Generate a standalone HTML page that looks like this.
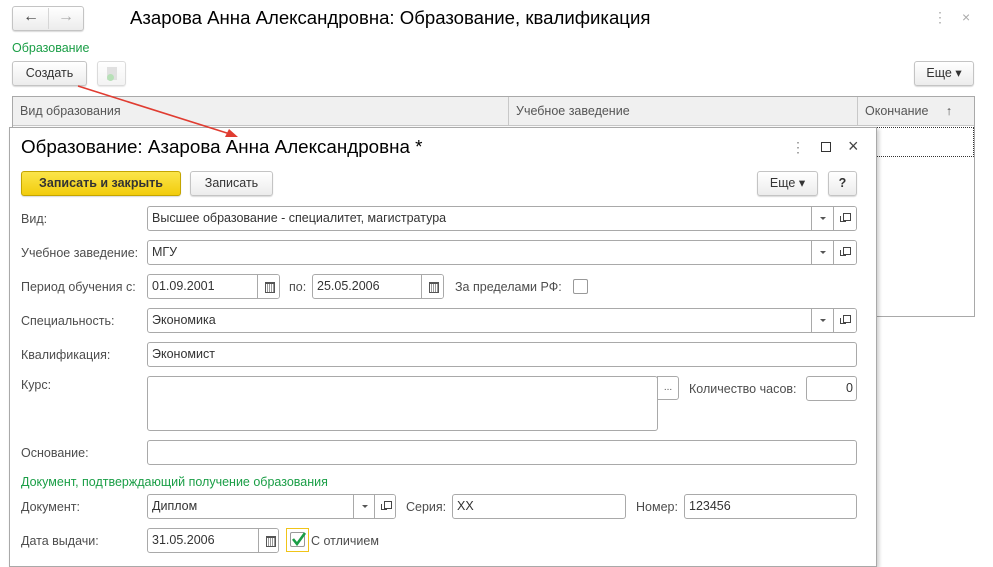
<!DOCTYPE html>
<html><head><meta charset="utf-8">
<style>
*{box-sizing:border-box;margin:0;padding:0}
body{width:993px;height:566px;background:#fff;position:relative;overflow:hidden;font-family:"Liberation Sans",Arial,sans-serif;font-size:12.5px;color:#4d4d4d}
.a{position:absolute}
.btn{position:absolute;border:1px solid #c4c4c4;border-radius:3px;background:linear-gradient(#fff,#ececec);box-shadow:0 1px 1px rgba(0,0,0,.15);color:#333;font-size:12.5px;text-align:center}
.f{position:absolute;border:1px solid #a9a9a9;border-radius:3px;background:#fff;height:25px;color:#333;font-size:12.5px;line-height:23px;padding-left:4px;white-space:nowrap;overflow:hidden}
.lbl{position:absolute;font-size:12.5px;color:#4d4d4d;line-height:14px}
.seg{position:absolute;top:0;height:23px;border-left:1px solid #a9a9a9;background:#fff}
.dd:after{content:"";position:absolute;left:8px;top:10px;border:3px solid transparent;border-top:3px solid #555}
.op:before{content:"";position:absolute;left:9px;top:6px;width:6px;height:6px;border:1px solid #444}
.op:after{content:"";position:absolute;left:6px;top:9px;width:5px;height:5px;border-left:1px solid #444;border-bottom:1px solid #444}
.cal:after{content:"";position:absolute;left:7px;top:7px;width:8px;height:8px;border:1px solid #555;border-top:2px solid #555;background:repeating-linear-gradient(90deg,#fff 0 1px,#999 1px 2px)}
</style></head><body>
<!-- main window -->
<div class="btn" style="left:12px;top:6px;width:72px;height:25px"></div>
<div class="a" style="left:48px;top:8px;width:1px;height:21px;background:#d6d6d6"></div>
<div class="a" style="left:23px;top:8px;font-size:16px;color:#444;font-weight:bold">&#8592;</div>
<div class="a" style="left:58px;top:8px;font-size:16px;color:#aaa;font-weight:bold">&#8594;</div>
<div class="a" style="left:130px;top:7px;font-size:18.6px;color:#000">Азарова Анна Александровна: Образование, квалификация</div>
<div class="a" style="left:933px;top:9px;font-size:14px;color:#aaa">&#8942;</div>
<div class="a" style="left:962px;top:9px;font-size:14px;color:#aaa">&#215;</div>
<div class="a" style="left:12px;top:41px;color:#1a9e46;font-size:12.5px">Образование</div>
<div class="btn" style="left:12px;top:61px;width:75px;height:25px;line-height:23px">Создать</div>
<div class="btn" style="left:97px;top:61px;width:29px;height:25px;opacity:.6"><div class="a" style="left:9px;top:5px;width:10px;height:13px;background:#ccc"></div><div class="a" style="left:9px;top:12px;width:7px;height:7px;border-radius:50%;background:#8c8"></div></div>
<div class="btn" style="left:914px;top:61px;width:60px;height:25px;line-height:23px">Еще ▾</div>
<div class="a" style="left:12px;top:96px;width:963px;height:221px;border:1px solid #a9a9a9;background:#fff"></div>
<div class="a" style="left:13px;top:97px;width:961px;height:29px;background:#f0f0f0;border-bottom:1px solid #c8c8c8"></div>
<div class="a" style="left:508px;top:97px;width:1px;height:29px;background:#c8c8c8"></div>
<div class="a" style="left:857px;top:97px;width:1px;height:29px;background:#c8c8c8"></div>
<div class="a" style="left:20px;top:104px;color:#555">Вид образования</div>
<div class="a" style="left:516px;top:104px;color:#555">Учебное заведение</div>
<div class="a" style="left:865px;top:104px;color:#555">Окончание &nbsp;&nbsp;&nbsp;&nbsp;↑</div>
<div class="a" style="left:870px;top:127px;width:104px;height:30px;border:1px dotted #333;border-left:none"></div>
<!-- dialog -->
<div class="a" style="left:9px;top:127px;width:868px;height:440px;border:1px solid #a9a9a9;background:#fff;box-shadow:2px 2px 4px rgba(0,0,0,.2)"></div>
<div class="a" style="left:21px;top:136px;font-size:18.8px;color:#000">Образование: Азарова Анна Александровна *</div>
<div class="a" style="left:791px;top:139px;font-size:14px;color:#888">&#8942;</div>
<div class="a" style="left:821px;top:142px;width:10px;height:10px;border:1px solid #333"></div>
<div class="a" style="left:848px;top:136px;font-size:18px;color:#444">&#215;</div>
<div class="btn" style="left:21px;top:171px;width:160px;height:25px;line-height:23px;background:linear-gradient(#fbe54a,#f2cc0c);border-color:#c4a500;font-weight:bold;color:#333">Записать и закрыть</div>
<div class="btn" style="left:190px;top:171px;width:83px;height:25px;line-height:23px">Записать</div>
<div class="btn" style="left:757px;top:171px;width:61px;height:25px;line-height:23px">Еще ▾</div>
<div class="btn" style="left:828px;top:171px;width:29px;height:25px;line-height:23px;font-weight:bold">?</div>

<div class="lbl" style="left:21px;top:212px">Вид:</div>
<div class="f" style="left:147px;top:206px;width:710px">Высшее образование - специалитет, магистратура<div class="seg dd" style="left:663px;width:22px"></div><div class="seg op" style="left:685px;width:23px"></div></div>
<div class="lbl" style="left:21px;top:246px">Учебное заведение:</div>
<div class="f" style="left:147px;top:240px;width:710px">МГУ<div class="seg dd" style="left:663px;width:22px"></div><div class="seg op" style="left:685px;width:23px"></div></div>
<div class="lbl" style="left:21px;top:280px">Период обучения с:</div>
<div class="f" style="left:147px;top:274px;width:133px">01.09.2001<div class="seg cal" style="left:109px;width:23px"></div></div>
<div class="lbl" style="left:289px;top:280px">по:</div>
<div class="f" style="left:312px;top:274px;width:132px">25.05.2006<div class="seg cal" style="left:108px;width:23px"></div></div>
<div class="lbl" style="left:455px;top:280px">За пределами РФ:</div>
<div class="a" style="left:573px;top:279px;width:15px;height:15px;border:1px solid #999;border-radius:2px"></div>
<div class="lbl" style="left:21px;top:314px">Специальность:</div>
<div class="f" style="left:147px;top:308px;width:710px">Экономика<div class="seg dd" style="left:663px;width:22px"></div><div class="seg op" style="left:685px;width:23px"></div></div>
<div class="lbl" style="left:21px;top:348px">Квалификация:</div>
<div class="f" style="left:147px;top:342px;width:710px">Экономист</div>
<div class="lbl" style="left:21px;top:378px">Курс:</div>
<div class="f" style="left:147px;top:376px;width:511px;height:55px"></div>
<div class="a" style="left:657px;top:376px;width:22px;height:24px;border:1px solid #a9a9a9;border-radius:0 3px 3px 0;text-align:center;line-height:22px;font-size:10px;color:#555">...</div>
<div class="lbl" style="left:689px;top:382px">Количество часов:</div>
<div class="f" style="left:806px;top:376px;width:51px;text-align:right;padding-right:3px">0</div>
<div class="lbl" style="left:21px;top:446px">Основание:</div>
<div class="f" style="left:147px;top:440px;width:710px"></div>
<div class="a" style="left:21px;top:475px;color:#1a9e46;font-size:12.5px">Документ, подтверждающий получение образования</div>
<div class="lbl" style="left:21px;top:500px">Документ:</div>
<div class="f" style="left:147px;top:494px;width:249px">Диплом<div class="seg dd" style="left:205px;width:21px"></div><div class="seg op" style="left:226px;width:22px"></div></div>
<div class="lbl" style="left:406px;top:500px">Серия:</div>
<div class="f" style="left:452px;top:494px;width:174px">XX</div>
<div class="lbl" style="left:636px;top:500px">Номер:</div>
<div class="f" style="left:684px;top:494px;width:173px">123456</div>
<div class="lbl" style="left:21px;top:534px">Дата выдачи:</div>
<div class="f" style="left:147px;top:528px;width:132px">31.05.2006<div class="seg cal" style="left:110px;width:21px"></div></div>
<div class="a" style="left:286px;top:528px;width:23px;height:24px;border:1px solid #f0c419"></div>
<div class="a" style="left:290px;top:532px;width:15px;height:15px;border:1px solid #999;border-radius:2px"></div>
<svg class="a" style="left:289px;top:529px" width="20" height="20"><path d="M4 10 L8 15 L16 4" stroke="#1a9e46" stroke-width="2.6" fill="none"/></svg>
<div class="lbl" style="left:311px;top:534px">С отличием</div>
<!-- arrow -->
<svg class="a" style="left:0;top:0" width="993" height="566"><line x1="78" y1="86" x2="230" y2="134" stroke="#e03c31" stroke-width="1.6"/><path d="M238 137 L225 137 L229 129 Z" fill="#e03c31"/></svg>
</body></html>
